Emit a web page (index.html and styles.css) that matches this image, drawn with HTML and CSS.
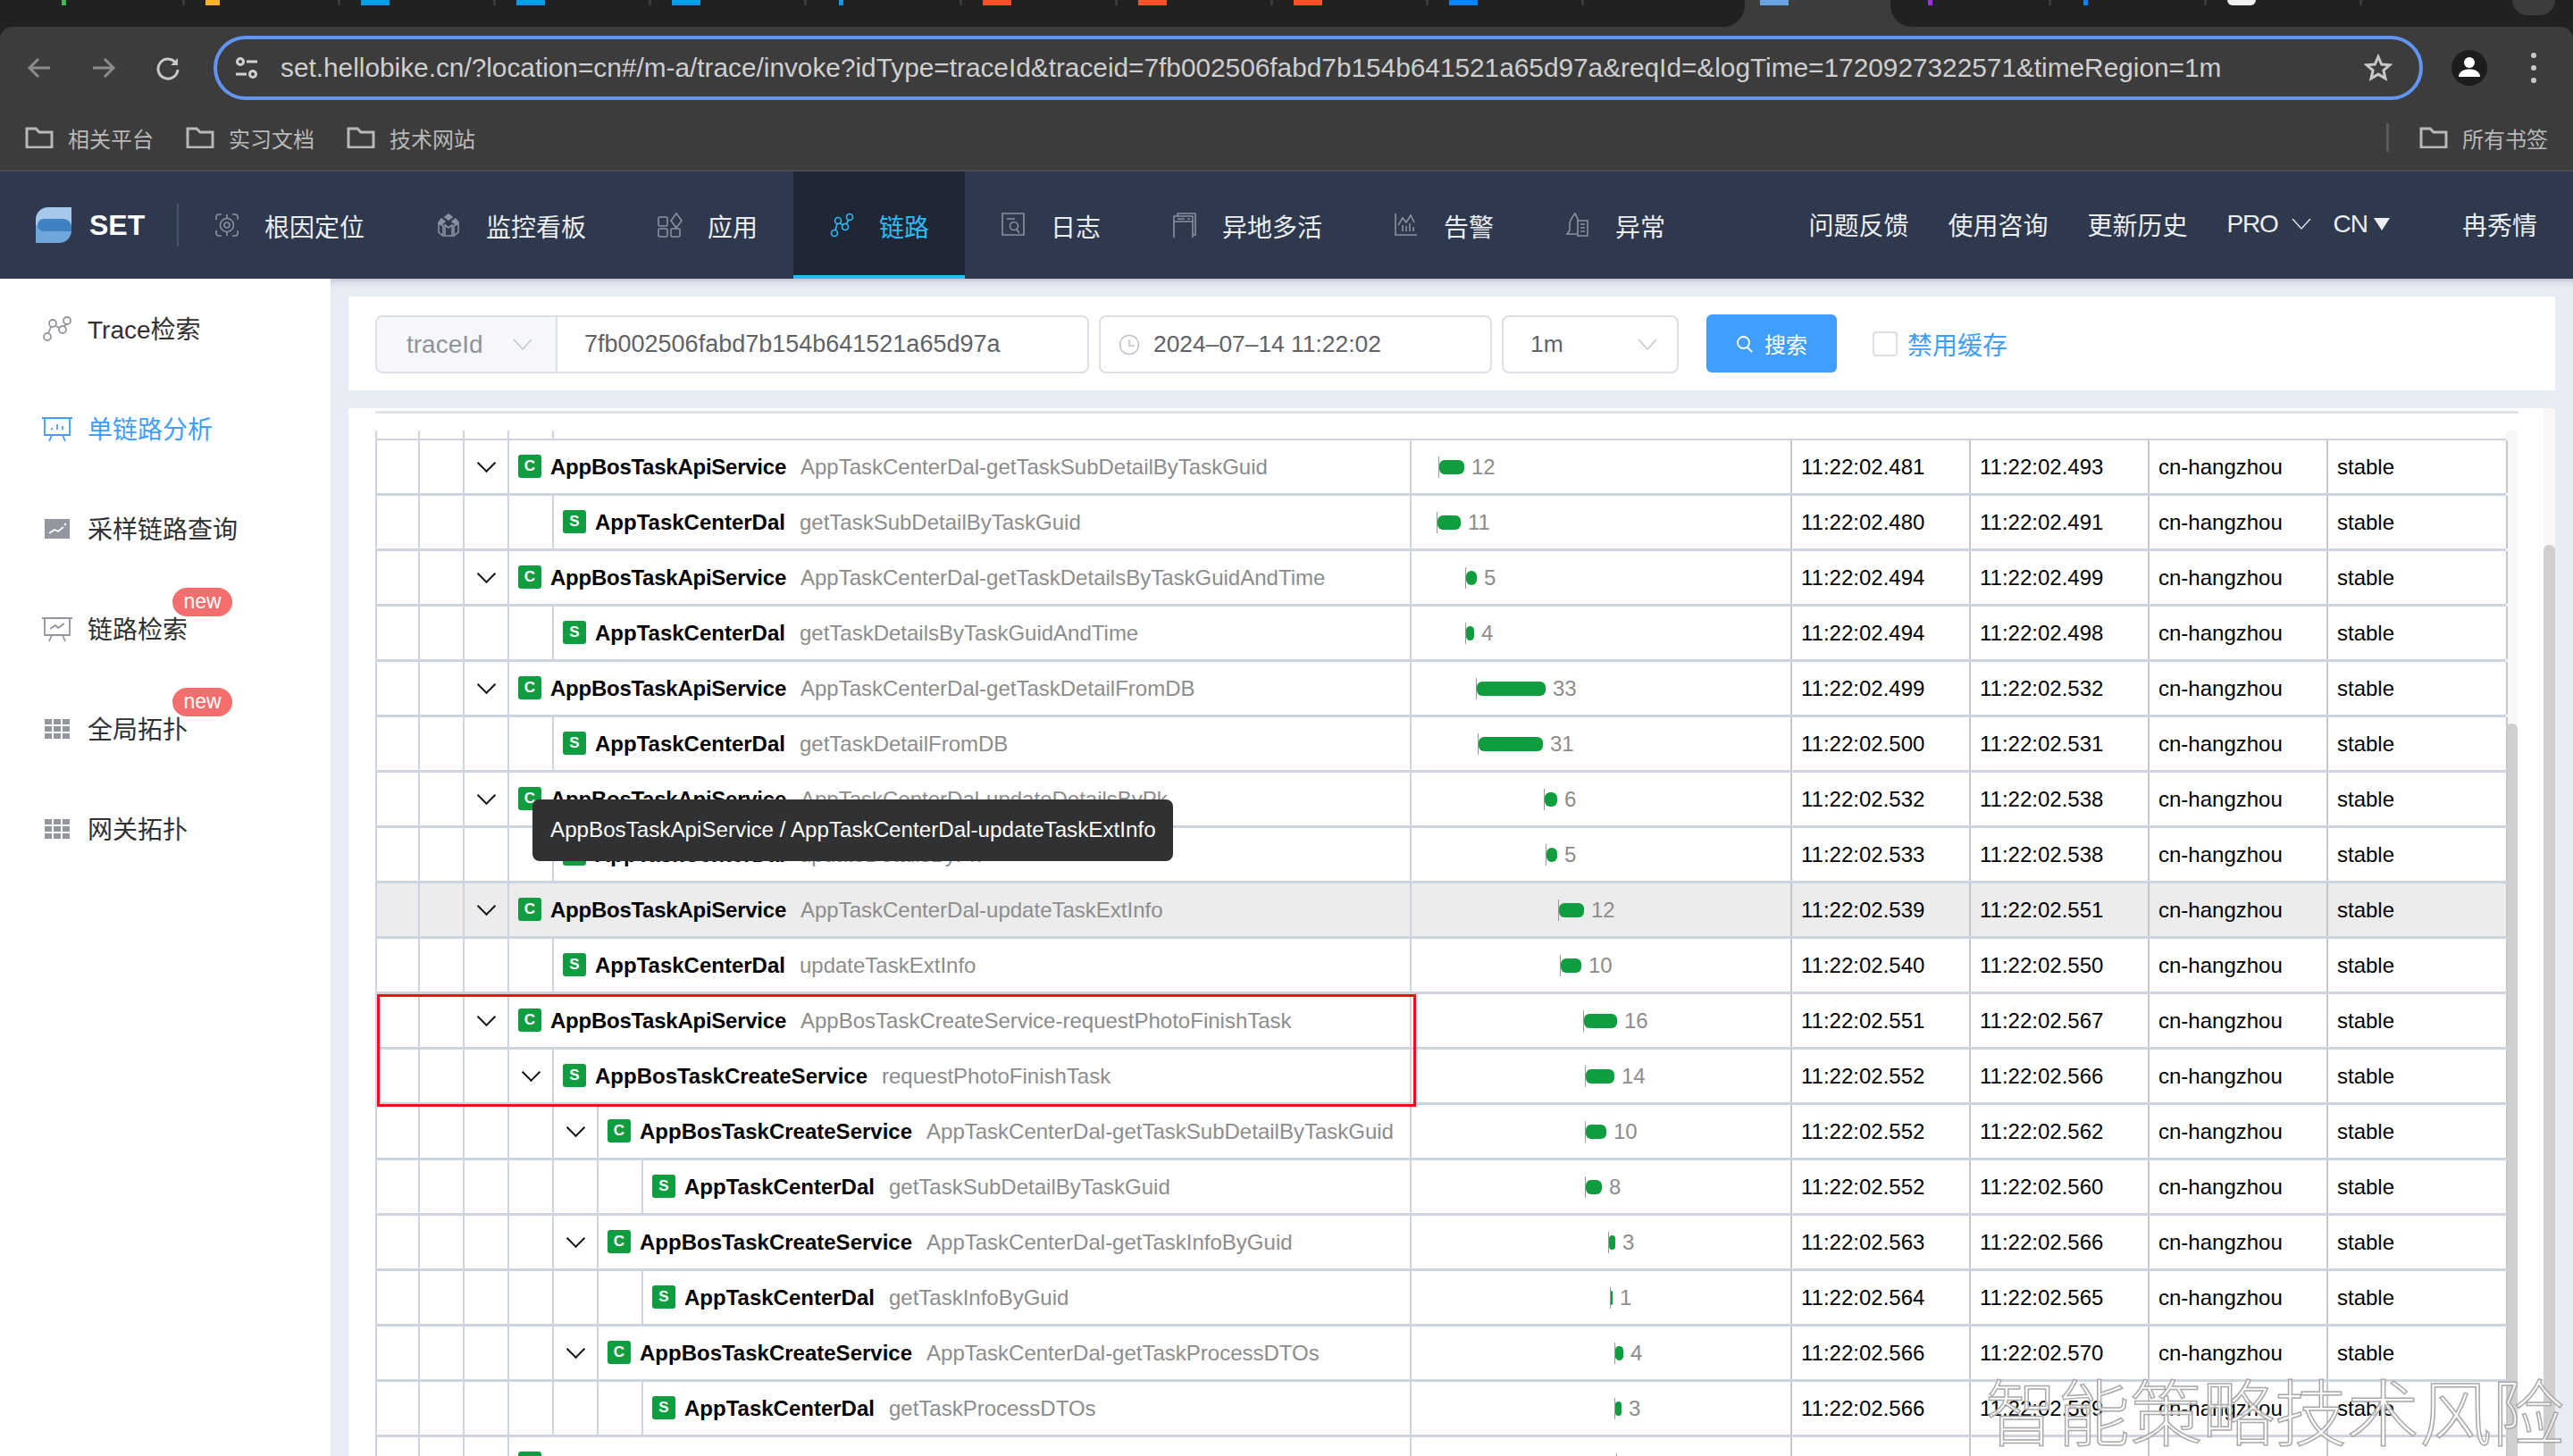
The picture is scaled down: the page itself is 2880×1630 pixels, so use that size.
FILE: index.html
```html
<!DOCTYPE html>
<html lang="zh-CN">
<head>
  <meta charset="UTF-8">
  <title>SET 链路</title>
  <link rel="stylesheet" href="styles.css">
</head>
<body>
  <div class="browser">
    <div class="tab-strip">
      <div class="tab-group tab-group-left">
        <div class="tab"><i class="fav fav-sliver green"></i></div>
        <div class="tab"><i class="fav fav-small yellow"></i></div>
        <div class="tab"><i class="fav blue"></i></div>
        <div class="tab"><i class="fav blue"></i></div>
        <div class="tab"><i class="fav blue"></i></div>
        <div class="tab"><i class="fav fav-sliver blue"></i></div>
        <div class="tab"><i class="fav red"></i></div>
        <div class="tab"><i class="fav red"></i></div>
        <div class="tab"><i class="fav red"></i></div>
        <div class="tab"><i class="fav azure"></i></div>
      </div>
      <div class="tab-active"><i class="fav sky"></i></div>
      <div class="tab-group tab-group-right">
        <div class="tab"><i class="fav fav-sliver purple"></i></div>
        <div class="tab"><i class="fav fav-sliver azure"></i></div>
        <div class="tab"><i class="fav white"></i></div>
        <div class="tab-search"></div>
      </div>
    </div>
    <div class="toolbar">
      <div class="toolbar-row">
        <svg class="tool-icon dim" viewBox="0 0 28 28"><path d="M26 14H4M13 4 3 14l10 10"/></svg>
        <svg class="tool-icon dim" viewBox="0 0 28 28"><path d="M2 14h22M15 4l10 10-10 10"/></svg>
        <svg class="tool-icon" viewBox="0 0 28 28"><path d="M23.5 9.5A11 11 0 1 0 25 16"/><path d="M25 3v8h-8" fill="#c8c8c8" stroke="none"/></svg>
        <div class="address">
          <svg class="tune" viewBox="0 0 26 26"><circle cx="6" cy="6" r="3.500"/><path d="M13 6h12M1 20h12"/><circle cx="20" cy="20" r="3.500"/></svg>
          <span class="url">set.hellobike.cn/?location=cn#/m-a/trace/invoke?idType=traceId&amp;traceid=7fb002506fabd7b154b641521a65d97a&amp;reqId=&amp;logTime=1720927322571&amp;timeRegion=1m</span>
          <svg class="star" viewBox="0 0 32 32"><path d="m16 3.500 3.700 8.500 9.200.8-7 6.100 2.100 9-8-4.800-8 4.800 2.100-9-7-6.100 9.200-.8z"/></svg>
        </div>
        <div class="avatar"><svg viewBox="0 0 40 40"><circle cx="20" cy="14" r="6"/><path d="M8 30c0-6 6-8.500 12-8.500s12 2.500 12 8.500z"/></svg></div>
        <div class="dots"><i></i><i></i><i></i></div>
      </div>
      <div class="bookmarks">
        <div class="bookmark"><svg class="folder" viewBox="0 0 32 24"><path d="M2 2h10l4 4h14v17H2z"/></svg>相关平台</div>
        <div class="bookmark"><svg class="folder" viewBox="0 0 32 24"><path d="M2 2h10l4 4h14v17H2z"/></svg>实习文档</div>
        <div class="bookmark"><svg class="folder" viewBox="0 0 32 24"><path d="M2 2h10l4 4h14v17H2z"/></svg>技术网站</div>
        <div class="bookmark-sep"></div>
        <div class="bookmark bookmark-all"><svg class="folder" viewBox="0 0 32 24"><path d="M2 2h10l4 4h14v17H2z"/></svg>所有书签</div>
      </div>
    </div>
  </div>

  <header class="app-header">
    <div class="brand">
      <svg class="logo" viewBox="0 0 40 40"><path d="M14 0h26v20H0v-6A14 14 0 0 1 14 0z" fill="#a6c8ea"/><path d="M0 20h40v6a14 14 0 0 1-14 14H0z" fill="#6fa6dc"/><path d="M9 13h22a9 9 0 0 1 9 9v5H9a7 7 0 0 1 0-14z" fill="#3e82c4"/></svg>
      <b>SET</b>
    </div>
    <nav class="nav">
      <a class="nav-item"><svg viewBox="0 0 28 28"><path d="M2 8V5a3 3 0 0 1 3-3h3M20 2h3a3 3 0 0 1 3 3v3M26 20v3a3 3 0 0 1-3 3h-3M8 26H5a3 3 0 0 1-3-3v-3"/><circle cx="14" cy="14" r="7.500"/><circle cx="14" cy="14" r="3"/><path d="M14 2v4M14 22v4"/></svg><span>根因定位</span></a>
      <a class="nav-item"><svg viewBox="0 0 28 28"><path d="m14 2 4 3-4 3-4-3z" fill="#8a92a0"/><path d="m6 7 4 3-4 3-3-2zM22 7l-4 3 4 3 3-2z" fill="#8a92a0"/><path d="M3 12v10l5 4V15zM25 12v10l-5 4V15zM10 14l4 3 4-3v12h-8z"/></svg><span>监控看板</span></a>
      <a class="nav-item"><svg viewBox="0 0 28 28"><rect x="1" y="5" width="10" height="10" rx="1.500"/><path d="m21 1 6 8-6 8-6-8z"/><rect x="1" y="18" width="10" height="9" rx="1.500"/><rect x="15" y="18" width="10" height="9" rx="1.500"/></svg><span>应用</span></a>
      <a class="nav-item active"><svg viewBox="0 0 28 28"><circle cx="6" cy="23" r="3.500"/><circle cx="10" cy="9" r="3.500"/><circle cx="18" cy="16" r="3.500"/><circle cx="23" cy="5" r="3.500"/><path d="m7 20 2-8M12 12l4 2M19 13l3-5"/></svg><span>链路</span></a>
      <a class="nav-item"><svg viewBox="0 0 28 28"><path d="M2 1h24v24H2zM7 7h9"/><circle cx="15" cy="15" r="4.500"/><path d="m18 19 3 4"/></svg><span>日志</span></a>
      <a class="nav-item"><svg viewBox="0 0 28 28"><path d="M6 4V1h20v24h-3"/><path d="M2 4h21v25H2zM2 10h21M6 7h8M17 7h3"/></svg><span>异地多活</span></a>
      <a class="nav-item"><svg viewBox="0 0 28 28"><path d="M2 1v24h24M5 14l5-8 4 5 5-8 4 8M10 21v-7M14 21v-6M18 21v-9M22 21v-5"/></svg><span>告警</span></a>
      <a class="nav-item"><svg viewBox="0 0 28 28"><path d="M14 9V7c-1-2-2-4-3-6-2 3-6 6-6 12v7l-3 4h12"/><path d="M14 9h11v17H14zM17 13h5M17 17h5M17 21h5"/></svg><span>异常</span></a>
    </nav>
    <div class="nav-right">
      <a>问题反馈</a>
      <a>使用咨询</a>
      <a>更新历史</a>
      <a class="nav-drop"><span>PRO</span><svg class="chev" viewBox="0 0 22 14"><path d="m1 1 10 11L21 1"/></svg></a>
      <a class="nav-cn"><span>CN</span><svg class="caret" viewBox="0 0 18 14"><path d="M0 0h18l-9 14z"/></svg></a>
      <a class="nav-user">冉秀情</a>
    </div>
  </header>

  <div class="layout">
    <aside class="sidebar">
      <a class="side-item"><svg viewBox="0 0 32 28"><circle cx="5" cy="23" r="4"/><circle cx="11" cy="8" r="4"/><circle cx="22" cy="15" r="4"/><circle cx="27" cy="5" r="4"/><path d="m6 19 3-7M14 11l5 2M24 11l2-2"/></svg><span>Trace检索</span></a>
      <a class="side-item active"><svg viewBox="0 0 34 28"><path d="M0 2h34M3 2v19h28V2M11 21l-3 7M23 21l3 7M11 15v-2M17 15v-6M23 15v-4"/></svg><span>单链路分析</span></a>
      <a class="side-item"><svg class="small" viewBox="0 0 28 22"><path class="solid" d="M0 0h28v22H0z"/><path class="knock" d="m5 16 6-4 4 2 6-5"/><circle class="knock-dot" cx="23" cy="6" r="1.300"/></svg><span>采样链路查询</span></a>
      <a class="side-item"><svg viewBox="0 0 34 28"><path d="M0 2h34M3 2v19h28V2M11 21l-3 7M23 21l3 7M9 14l6-4 3 3 7-5"/></svg><span>链路检索</span><em class="badge">new</em></a>
      <a class="side-item"><svg class="small" viewBox="0 0 28 22"><path class="solid" d="M0 0h8v6H0zM10 0h8v6h-8zM20 0h8v6h-8zM0 8h8v6H0zM10 8h8v6h-8zM20 8h8v6h-8zM0 16h8v6H0zM10 16h8v6h-8zM20 16h8v6h-8z"/></svg><span>全局拓扑</span><em class="badge">new</em></a>
      <a class="side-item"><svg class="small" viewBox="0 0 28 22"><path class="solid" d="M0 0h8v6H0zM10 0h8v6h-8zM20 0h8v6h-8zM0 8h8v6H0zM10 8h8v6h-8zM20 8h8v6h-8zM0 16h8v6H0zM10 16h8v6h-8zM20 16h8v6h-8z"/></svg><span>网关拓扑</span></a>
    </aside>

    <main class="main">
      <section class="search-panel">
        <div class="id-group">
          <div class="id-type">traceId<svg class="arrow" viewBox="0 0 22 14"><path d="m1 1 10 11L21 1"/></svg></div>
          <div class="id-value">7fb002506fabd7b154b641521a65d97a</div>
        </div>
        <div class="date-input"><svg class="clock" viewBox="0 0 24 24"><circle cx="12" cy="12" r="10.500"/><path d="M12 6v7h6"/></svg>2024–07–14 11:22:02</div>
        <div class="range-input">1m<svg class="arrow" viewBox="0 0 22 14"><path d="m1 1 10 11L21 1"/></svg></div>
        <button class="search-btn"><svg viewBox="0 0 20 20"><circle cx="8.500" cy="8.500" r="6.500"/><path d="m13 14 5 5"/></svg>搜索</button>
        <label class="cache-check"><i></i>禁用缓存</label>
      </section>

      <section class="trace-panel">
        <div class="panel-inner">
          <div class="top-line"></div>
          <div class="table-wrap">
            <div class="table">
              <div class="stub"><i></i><i></i><i></i><i></i><i></i></div>

              <div class="row">
                <div class="name-cell"><i class="ind"></i><i class="ind"></i><i class="ind chev-cell"></i><b class="tag">C</b><b class="svc svc-api">AppBosTaskApiService</b><span class="method">AppTaskCenterDal-getTaskSubDetailByTaskGuid</span></div>
                <div class="bar-cell"><i class="tick" style="margin-left:30px"></i><i class="bar" style="width:28px"></i><span>12</span></div>
                <div>11:22:02.481</div><div>11:22:02.493</div><div>cn-hangzhou</div><div>stable</div>
              </div>
              <div class="row">
                <div class="name-cell"><i class="ind"></i><i class="ind"></i><i class="ind"></i><i class="ind"></i><b class="tag">S</b><b class="svc">AppTaskCenterDal</b><span class="method">getTaskSubDetailByTaskGuid</span></div>
                <div class="bar-cell"><i class="tick" style="margin-left:28px"></i><i class="bar" style="width:26px"></i><span>11</span></div>
                <div>11:22:02.480</div><div>11:22:02.491</div><div>cn-hangzhou</div><div>stable</div>
              </div>
              <div class="row">
                <div class="name-cell"><i class="ind"></i><i class="ind"></i><i class="ind chev-cell"></i><b class="tag">C</b><b class="svc svc-api">AppBosTaskApiService</b><span class="method">AppTaskCenterDal-getTaskDetailsByTaskGuidAndTime</span></div>
                <div class="bar-cell"><i class="tick" style="margin-left:60px"></i><i class="bar" style="width:12px"></i><span>5</span></div>
                <div>11:22:02.494</div><div>11:22:02.499</div><div>cn-hangzhou</div><div>stable</div>
              </div>
              <div class="row">
                <div class="name-cell"><i class="ind"></i><i class="ind"></i><i class="ind"></i><i class="ind"></i><b class="tag">S</b><b class="svc">AppTaskCenterDal</b><span class="method">getTaskDetailsByTaskGuidAndTime</span></div>
                <div class="bar-cell"><i class="tick" style="margin-left:60px"></i><i class="bar" style="width:9px"></i><span>4</span></div>
                <div>11:22:02.494</div><div>11:22:02.498</div><div>cn-hangzhou</div><div>stable</div>
              </div>
              <div class="row">
                <div class="name-cell"><i class="ind"></i><i class="ind"></i><i class="ind chev-cell"></i><b class="tag">C</b><b class="svc svc-api">AppBosTaskApiService</b><span class="method">AppTaskCenterDal-getTaskDetailFromDB</span></div>
                <div class="bar-cell"><i class="tick" style="margin-left:72px"></i><i class="bar" style="width:77px"></i><span>33</span></div>
                <div>11:22:02.499</div><div>11:22:02.532</div><div>cn-hangzhou</div><div>stable</div>
              </div>
              <div class="row">
                <div class="name-cell"><i class="ind"></i><i class="ind"></i><i class="ind"></i><i class="ind"></i><b class="tag">S</b><b class="svc">AppTaskCenterDal</b><span class="method">getTaskDetailFromDB</span></div>
                <div class="bar-cell"><i class="tick" style="margin-left:74px"></i><i class="bar" style="width:72px"></i><span>31</span></div>
                <div>11:22:02.500</div><div>11:22:02.531</div><div>cn-hangzhou</div><div>stable</div>
              </div>
              <div class="row">
                <div class="name-cell"><i class="ind"></i><i class="ind"></i><i class="ind chev-cell"></i><b class="tag">C</b><b class="svc svc-api">AppBosTaskApiService</b><span class="method">AppTaskCenterDal-updateDetailsByPk</span></div>
                <div class="bar-cell"><i class="tick" style="margin-left:148px"></i><i class="bar" style="width:14px"></i><span>6</span></div>
                <div>11:22:02.532</div><div>11:22:02.538</div><div>cn-hangzhou</div><div>stable</div>
              </div>
              <div class="row">
                <div class="name-cell"><i class="ind"></i><i class="ind"></i><i class="ind"></i><i class="ind"></i><b class="tag">S</b><b class="svc">AppTaskCenterDal</b><span class="method">updateDetailsByPk</span></div>
                <div class="bar-cell"><i class="tick" style="margin-left:150px"></i><i class="bar" style="width:12px"></i><span>5</span></div>
                <div>11:22:02.533</div><div>11:22:02.538</div><div>cn-hangzhou</div><div>stable</div>
              </div>
              <div class="row hover">
                <div class="name-cell"><i class="ind"></i><i class="ind"></i><i class="ind chev-cell"></i><b class="tag">C</b><b class="svc svc-api">AppBosTaskApiService</b><span class="method">AppTaskCenterDal-updateTaskExtInfo</span></div>
                <div class="bar-cell"><i class="tick" style="margin-left:164px"></i><i class="bar" style="width:28px"></i><span>12</span></div>
                <div>11:22:02.539</div><div>11:22:02.551</div><div>cn-hangzhou</div><div>stable</div>
              </div>
              <div class="row">
                <div class="name-cell"><i class="ind"></i><i class="ind"></i><i class="ind"></i><i class="ind"></i><b class="tag">S</b><b class="svc">AppTaskCenterDal</b><span class="method">updateTaskExtInfo</span></div>
                <div class="bar-cell"><i class="tick" style="margin-left:166px"></i><i class="bar" style="width:23px"></i><span>10</span></div>
                <div>11:22:02.540</div><div>11:22:02.550</div><div>cn-hangzhou</div><div>stable</div>
              </div>
              <div class="row">
                <div class="name-cell"><i class="ind"></i><i class="ind"></i><i class="ind chev-cell"></i><b class="tag">C</b><b class="svc svc-api">AppBosTaskApiService</b><span class="method">AppBosTaskCreateService-requestPhotoFinishTask</span></div>
                <div class="bar-cell"><i class="tick" style="margin-left:192px"></i><i class="bar" style="width:37px"></i><span>16</span></div>
                <div>11:22:02.551</div><div>11:22:02.567</div><div>cn-hangzhou</div><div>stable</div>
              </div>
              <div class="row">
                <div class="name-cell"><i class="ind"></i><i class="ind"></i><i class="ind"></i><i class="ind chev-cell"></i><b class="tag">S</b><b class="svc">AppBosTaskCreateService</b><span class="method">requestPhotoFinishTask</span></div>
                <div class="bar-cell"><i class="tick" style="margin-left:194px"></i><i class="bar" style="width:32px"></i><span>14</span></div>
                <div>11:22:02.552</div><div>11:22:02.566</div><div>cn-hangzhou</div><div>stable</div>
              </div>
              <div class="row">
                <div class="name-cell"><i class="ind"></i><i class="ind"></i><i class="ind"></i><i class="ind"></i><i class="ind chev-cell"></i><b class="tag">C</b><b class="svc">AppBosTaskCreateService</b><span class="method">AppTaskCenterDal-getTaskSubDetailByTaskGuid</span></div>
                <div class="bar-cell"><i class="tick" style="margin-left:194px"></i><i class="bar" style="width:23px"></i><span>10</span></div>
                <div>11:22:02.552</div><div>11:22:02.562</div><div>cn-hangzhou</div><div>stable</div>
              </div>
              <div class="row">
                <div class="name-cell"><i class="ind"></i><i class="ind"></i><i class="ind"></i><i class="ind"></i><i class="ind"></i><i class="ind"></i><b class="tag">S</b><b class="svc">AppTaskCenterDal</b><span class="method">getTaskSubDetailByTaskGuid</span></div>
                <div class="bar-cell"><i class="tick" style="margin-left:194px"></i><i class="bar" style="width:18px"></i><span>8</span></div>
                <div>11:22:02.552</div><div>11:22:02.560</div><div>cn-hangzhou</div><div>stable</div>
              </div>
              <div class="row">
                <div class="name-cell"><i class="ind"></i><i class="ind"></i><i class="ind"></i><i class="ind"></i><i class="ind chev-cell"></i><b class="tag">C</b><b class="svc">AppBosTaskCreateService</b><span class="method">AppTaskCenterDal-getTaskInfoByGuid</span></div>
                <div class="bar-cell"><i class="tick" style="margin-left:220px"></i><i class="bar" style="width:7px"></i><span>3</span></div>
                <div>11:22:02.563</div><div>11:22:02.566</div><div>cn-hangzhou</div><div>stable</div>
              </div>
              <div class="row">
                <div class="name-cell"><i class="ind"></i><i class="ind"></i><i class="ind"></i><i class="ind"></i><i class="ind"></i><i class="ind"></i><b class="tag">S</b><b class="svc">AppTaskCenterDal</b><span class="method">getTaskInfoByGuid</span></div>
                <div class="bar-cell"><i class="tick" style="margin-left:222px"></i><i class="bar" style="width:2px"></i><span>1</span></div>
                <div>11:22:02.564</div><div>11:22:02.565</div><div>cn-hangzhou</div><div>stable</div>
              </div>
              <div class="row">
                <div class="name-cell"><i class="ind"></i><i class="ind"></i><i class="ind"></i><i class="ind"></i><i class="ind chev-cell"></i><b class="tag">C</b><b class="svc">AppBosTaskCreateService</b><span class="method">AppTaskCenterDal-getTaskProcessDTOs</span></div>
                <div class="bar-cell"><i class="tick" style="margin-left:227px"></i><i class="bar" style="width:9px"></i><span>4</span></div>
                <div>11:22:02.566</div><div>11:22:02.570</div><div>cn-hangzhou</div><div>stable</div>
              </div>
              <div class="row">
                <div class="name-cell"><i class="ind"></i><i class="ind"></i><i class="ind"></i><i class="ind"></i><i class="ind"></i><i class="ind"></i><b class="tag">S</b><b class="svc">AppTaskCenterDal</b><span class="method">getTaskProcessDTOs</span></div>
                <div class="bar-cell"><i class="tick" style="margin-left:227px"></i><i class="bar" style="width:7px"></i><span>3</span></div>
                <div>11:22:02.566</div><div>11:22:02.569</div><div>cn-hangzhou</div><div>stable</div>
              </div>
              <div class="row">
                <div class="name-cell"><i class="ind"></i><i class="ind"></i><i class="ind"></i><b class="tag">&nbsp;</b></div>
                <div class="bar-cell"><i class="tick" style="margin-left:229px"></i></div>
                <div></div><div></div><div></div><div></div>
              </div>

              <div class="tooltip">AppBosTaskApiService / AppTaskCenterDal-updateTaskExtInfo</div>
              <div class="red-box"></div>
            </div>
            <div class="track inner-track"><i></i></div>
          </div>
        </div>
        <div class="track outer-track"><i></i></div>
      </section>
    </main>
  </div>

  <div class="watermark">智能策略技术风险</div>
</body>
</html>
```

FILE: styles.css
```css
* {
  box-sizing: border-box;
}
html, body {
  margin: 0;
  height: 1630px;
  overflow: hidden;
}
body {
  position: relative;
  font-family: "Liberation Sans", "Noto Sans CJK SC", sans-serif;
  background: #e8ecf4;
  display: flex;
  flex-direction: column;
}
svg {
  display: block;
  flex: none;
  fill: none;
}

/* browser chrome */
.browser {
  background: #202222;
  flex: none;
}
.tab-strip {
  height: 30px;
  display: flex;
  background: #3c3c3c;
}
.tab-group {
  background: #202222;
  display: flex;
  height: 30px;
}
.tab-group-left {
  width: 1953px;
  padding-left: 33px;
  border-radius: 0 0 24px 0;
}
.tab-group-right {
  flex: 1;
  padding-left: 6px;
  border-radius: 0 0 0 24px;
  position: relative;
}
.tab-active {
  width: 163px;
  padding-left: 17px;
}
.tab {
  width: 174px;
  height: 6px;
  padding-left: 23px;
  border-right: 3px solid #3a3c3c;
}
.fav {
  display: block;
  width: 32px;
  height: 6px;
}
.fav-small {
  width: 16px;
}
.fav-sliver {
  width: 5px;
  margin-left: 13px;
}
.green { background: #3fb950; }
.yellow { background: #f6b12d; }
.blue { background: #0a9be8; }
.red { background: #f4532c; }
.azure { background: #0a84ff; }
.sky { background: #6aa5e0; }
.purple { background: #a22bea; }
.white { background: #f0f0f0; border-radius: 0 0 8px 8px; }
.tab-search {
  position: absolute;
  right: 20px;
  top: 0;
  width: 48px;
  height: 17px;
  background: #3c3c3c;
  border-radius: 0 0 20px 20px;
}
.toolbar {
  height: 162px;
  background: #3c3c3c;
  border-bottom: 2px solid #4a4a4a;
  border-radius: 14px 14px 0 0;
}
.toolbar-row {
  height: 92px;
  padding: 10px 0 10px 30px;
  display: flex;
  align-items: center;
}
.tool-icon {
  width: 28px;
  height: 28px;
  margin-right: 44px;
  stroke: #c8c8c8;
  stroke-width: 3;
}
.tool-icon.dim {
  stroke: #8c8c8c;
}
.tool-icon:nth-child(3) {
  margin-right: 37px;
}
.address {
  width: 2473px;
  height: 72px;
  border: 4px solid #6394f0;
  border-radius: 36px;
  display: flex;
  align-items: center;
  padding: 0 30px 0 20px;
}
.tune {
  width: 26px;
  height: 26px;
  margin-right: 25px;
  stroke: #d0d0d0;
  stroke-width: 3;
}
.url {
  font-size: 29.800px;
  color: #cfcfcf;
  white-space: nowrap;
  flex: 1;
}
.star {
  width: 32px;
  height: 32px;
  stroke: #c8c8c8;
  stroke-width: 3;
}
.avatar {
  width: 40px;
  height: 40px;
  margin-left: 32px;
  border-radius: 50%;
  background: #1c1c1c;
  overflow: hidden;
}
.avatar svg {
  fill: #fff;
}
.dots {
  margin-left: 49px;
  display: flex;
  flex-direction: column;
  gap: 8px;
}
.dots i {
  width: 6px;
  height: 6px;
  border-radius: 50%;
  background: #c8c8c8;
}
.bookmarks {
  height: 68px;
  padding: 0 28px 4px;
  display: flex;
  align-items: center;
  gap: 36px;
}
.bookmark {
  display: flex;
  align-items: center;
  font-size: 24px;
  color: #b8b8b8;
  gap: 16px;
}
.folder {
  width: 32px;
  height: 24px;
  stroke: #b8b8b8;
  stroke-width: 3;
}
.bookmark-sep {
  width: 3px;
  height: 32px;
  margin-left: auto;
  background: #5a5a5a;
}
.bookmark-all {
  margin-left: -2px;
}

/* app header */
.app-header {
  flex: none;
  height: 120px;
  background: #2e394d;
  display: flex;
  align-items: center;
  color: #eceef2;
  font-size: 28px;
}
.brand {
  width: 200px;
  height: 48px;
  padding-left: 40px;
  border-right: 2px solid #43536d;
  display: flex;
  align-items: center;
  gap: 20px;
}
.logo {
  width: 40px;
  height: 40px;
}
.brand b {
  font-size: 32px;
  color: #fff;
}
.nav {
  display: flex;
  height: 120px;
}
.nav-item {
  padding: 0 40px;
  height: 120px;
  display: flex;
  align-items: center;
  gap: 28px;
}
.nav-item svg {
  width: 28px;
  height: 28px;
  stroke: #8a92a0;
  stroke-width: 1.600;
}
.nav-item span {
  padding-top: 8px;
  line-height: 40px;
}
.nav-item.active {
  background: #1f2737;
  box-shadow: inset 0 -4px 0 #2bbcf5;
  color: #2bbcf5;
}
.nav-item.active svg {
  stroke: #2bbcf5;
}
.nav-right {
  margin-left: auto;
  padding: 0 40px 2px 0;
  display: flex;
  align-items: center;
  gap: 44px;
}
.nav-drop {
  display: flex;
  align-items: center;
  gap: 15px;
}
.nav-drop span {
  letter-spacing: -1.200px;
}
.chev {
  width: 22px;
  height: 14px;
  stroke: #d8dce4;
  stroke-width: 1.500;
}
.nav-cn {
  display: flex;
  align-items: center;
  gap: 7px;
  margin-left: -19px;
}
.nav-cn span {
  letter-spacing: -1px;
}
.caret {
  width: 18px;
  height: 14px;
  fill: #eceef2;
}
.nav-user {
  margin-left: 37px;
}

/* sidebar */
.layout {
  flex: 1;
  min-height: 0;
  display: flex;
  box-shadow: inset 0 10px 8px -8px #b4bac6;
}
.sidebar {
  width: 370px;
  flex: none;
  background: #fff;
}
.side-item {
  position: relative;
  height: 112px;
  padding-left: 47px;
  display: flex;
  align-items: center;
  font-size: 28px;
  color: #303133;
}
.side-item span {
  padding-bottom: 3px;
}
.side-item svg {
  width: 34px;
  height: 28px;
  margin-right: 17px;
  stroke: #93959f;
  stroke-width: 1.800;
}
.side-item svg.small {
  width: 28px;
  height: 22px;
  margin: 0 20px 0 3px;
}
.side-item .solid {
  fill: #93959f;
  stroke: none;
}
.side-item .knock {
  stroke: #fff;
  stroke-width: 1.800;
}
.side-item .knock-dot {
  fill: #fff;
  stroke: none;
}
.side-item.active {
  color: #409eff;
}
.side-item.active svg {
  stroke: #409eff;
}
.badge {
  position: absolute;
  left: 193px;
  top: 10px;
  width: 67px;
  height: 32px;
  border-radius: 16px;
  background: #f46e6e;
  color: #fff;
  font-size: 23px;
  font-style: normal;
  line-height: 30px;
  text-align: center;
}

/* main */
.main {
  flex: 1;
  min-width: 0;
  min-height: 0;
  padding: 20px 20px 0;
  display: flex;
  flex-direction: column;
  gap: 20px;
}
.search-panel {
  height: 105px;
  flex: none;
  background: #fff;
  padding: 20px 30px 0;
  display: flex;
  align-items: flex-start;
  font-size: 26.400px;
  color: #606266;
}
.id-group {
  width: 799px;
  height: 65px;
  margin-top: 1px;
  border: 2px solid #dcdfe6;
  border-radius: 8px;
  display: flex;
  overflow: hidden;
}
.id-type {
  width: 202px;
  background: #f5f7fa;
  border-right: 2px solid #dcdfe6;
  padding: 0 26px 0 33px;
  color: #909399;
  font-size: 28px;
  display: flex;
  align-items: center;
  justify-content: space-between;
}
.arrow {
  width: 22px;
  height: 14px;
  stroke: #c0c4cc;
  stroke-width: 1.500;
}
.id-value {
  padding-left: 30px;
  font-size: 27px;
  line-height: 61px;
}
.date-input {
  width: 440px;
  height: 65px;
  margin: 1px 0 0 11px;
  border: 2px solid #dcdfe6;
  border-radius: 8px;
  display: flex;
  align-items: center;
  padding-left: 20px;
  gap: 15px;
}
.clock {
  width: 24px;
  height: 24px;
  stroke: #c0c4cc;
  stroke-width: 1.500;
}
.range-input {
  width: 198px;
  height: 65px;
  margin: 1px 0 0 11px;
  border: 2px solid #dcdfe6;
  border-radius: 8px;
  display: flex;
  align-items: center;
  justify-content: space-between;
  padding: 0 22px 0 30px;
}
.search-btn {
  width: 146px;
  height: 65px;
  margin-left: 31px;
  border: none;
  border-radius: 6px;
  background: #409eff;
  color: #fff;
  font-family: inherit;
  font-size: 24px;
  display: flex;
  align-items: center;
  justify-content: center;
  gap: 12px;
}
.search-btn svg {
  width: 20px;
  height: 20px;
  stroke: #fff;
  stroke-width: 1.800;
}
.cache-check {
  margin: 13px 0 0 40px;
  display: flex;
  align-items: center;
  gap: 11px;
  font-size: 28px;
  color: #409eff;
}
.cache-check i {
  width: 28px;
  height: 28px;
  border: 2px solid #dcdfe6;
  border-radius: 4px;
}

.trace-panel {
  flex: 1;
  min-height: 0;
  background: #fff;
  display: flex;
}
.panel-inner {
  flex: 1;
  min-width: 0;
  min-height: 0;
  padding: 3px 28px 0 30px;
}
.top-line {
  height: 3px;
  background: #dfe3ec;
}
.table-wrap {
  margin-top: 19px;
  display: flex;
  height: 1148px;
  overflow: hidden;
}
.table {
  position: relative;
  width: 2385px;
  flex: none;
}
.stub {
  height: 11px;
  display: flex;
  border-bottom: 2px solid #cdd3e0;
}
.stub i {
  width: 50px;
  border-left: 2px solid #cdd3e0;
}
.stub i:first-child {
  width: 48px;
}
.row {
  height: 62px;
  display: grid;
  grid-template-columns: 1158px 426px 200px 200px 200px 201px;
  border-bottom: 3px solid #cdd3e0;
  border-left: 2px solid #cdd3e0;
  font-size: 24px;
  color: #000;
}
.row > div {
  display: flex;
  align-items: center;
  padding-left: 10px;
  border-right: 2px solid #c4c7ce;
  white-space: nowrap;
  overflow: hidden;
}
.row.hover {
  background: #ececec;
}
.row > .name-cell {
  padding-left: 0;
  border-right-color: #cdd3e0;
}
.ind {
  width: 50px;
  height: 100%;
  flex: none;
  border-right: 2px solid #cdd3e0;
}
.ind:first-child {
  width: 48px;
}
.chev-cell {
  position: relative;
}
.chev-cell::after {
  content: "";
  position: absolute;
  left: 17px;
  top: 18px;
  width: 13px;
  height: 13px;
  border-right: 2.500px solid #111;
  border-bottom: 2.500px solid #111;
  transform: rotate(45deg);
}
.tag {
  width: 26px;
  height: 26px;
  flex: none;
  margin: -2px 10px 0 10px;
  border-radius: 3px;
  background: #0f9d3f;
  color: #fff;
  font-size: 17px;
  line-height: 26px;
  text-align: center;
}
.svc {
  margin-right: 16px;
  color: #000;
}
.svc-api {
  letter-spacing: -.25px;
}
.method {
  color: #8c8c8c;
}
.row > .bar-cell {
  padding-left: 0;
  color: #8c8c8c;
}
.tick {
  width: 1px;
  height: 24px;
  flex: none;
  background: #999;
}
.bar {
  height: 16px;
  flex: none;
  margin-right: 8px;
  background: #0f9d3f;
  border-radius: 6px;
}
.tooltip {
  position: absolute;
  left: 176px;
  top: 413px;
  width: 717px;
  height: 69px;
  padding-left: 20px;
  border-radius: 8px;
  background: #303133;
  color: #fff;
  font-size: 24.200px;
  line-height: 67px;
  white-space: nowrap;
}
.red-box {
  position: absolute;
  left: 2px;
  top: 631px;
  width: 1163px;
  height: 126px;
  border: 3px solid #f01010;
}
.track {
  flex: none;
  background: #f7f7f7;
}
.track i {
  display: block;
  background: #cfcfcf;
  border-radius: 6px 6px 0 0;
  height: 2000px;
}
.inner-track {
  width: 13px;
}
.inner-track i {
  margin-top: 328px;
}
.outer-track {
  width: 13px;
  overflow: hidden;
}
.outer-track i {
  margin-top: 153px;
}

/* corner watermark */
.watermark {
  position: absolute;
  right: 10px;
  bottom: 8px;
  font-family: "Noto Sans CJK SC", sans-serif;
  font-size: 81px;
  font-weight: 300;
  line-height: 90px;
  white-space: nowrap;
  color: rgba(255, 255, 255, .8);
  -webkit-text-stroke: 1.500px #a8a8a8;
}
```
